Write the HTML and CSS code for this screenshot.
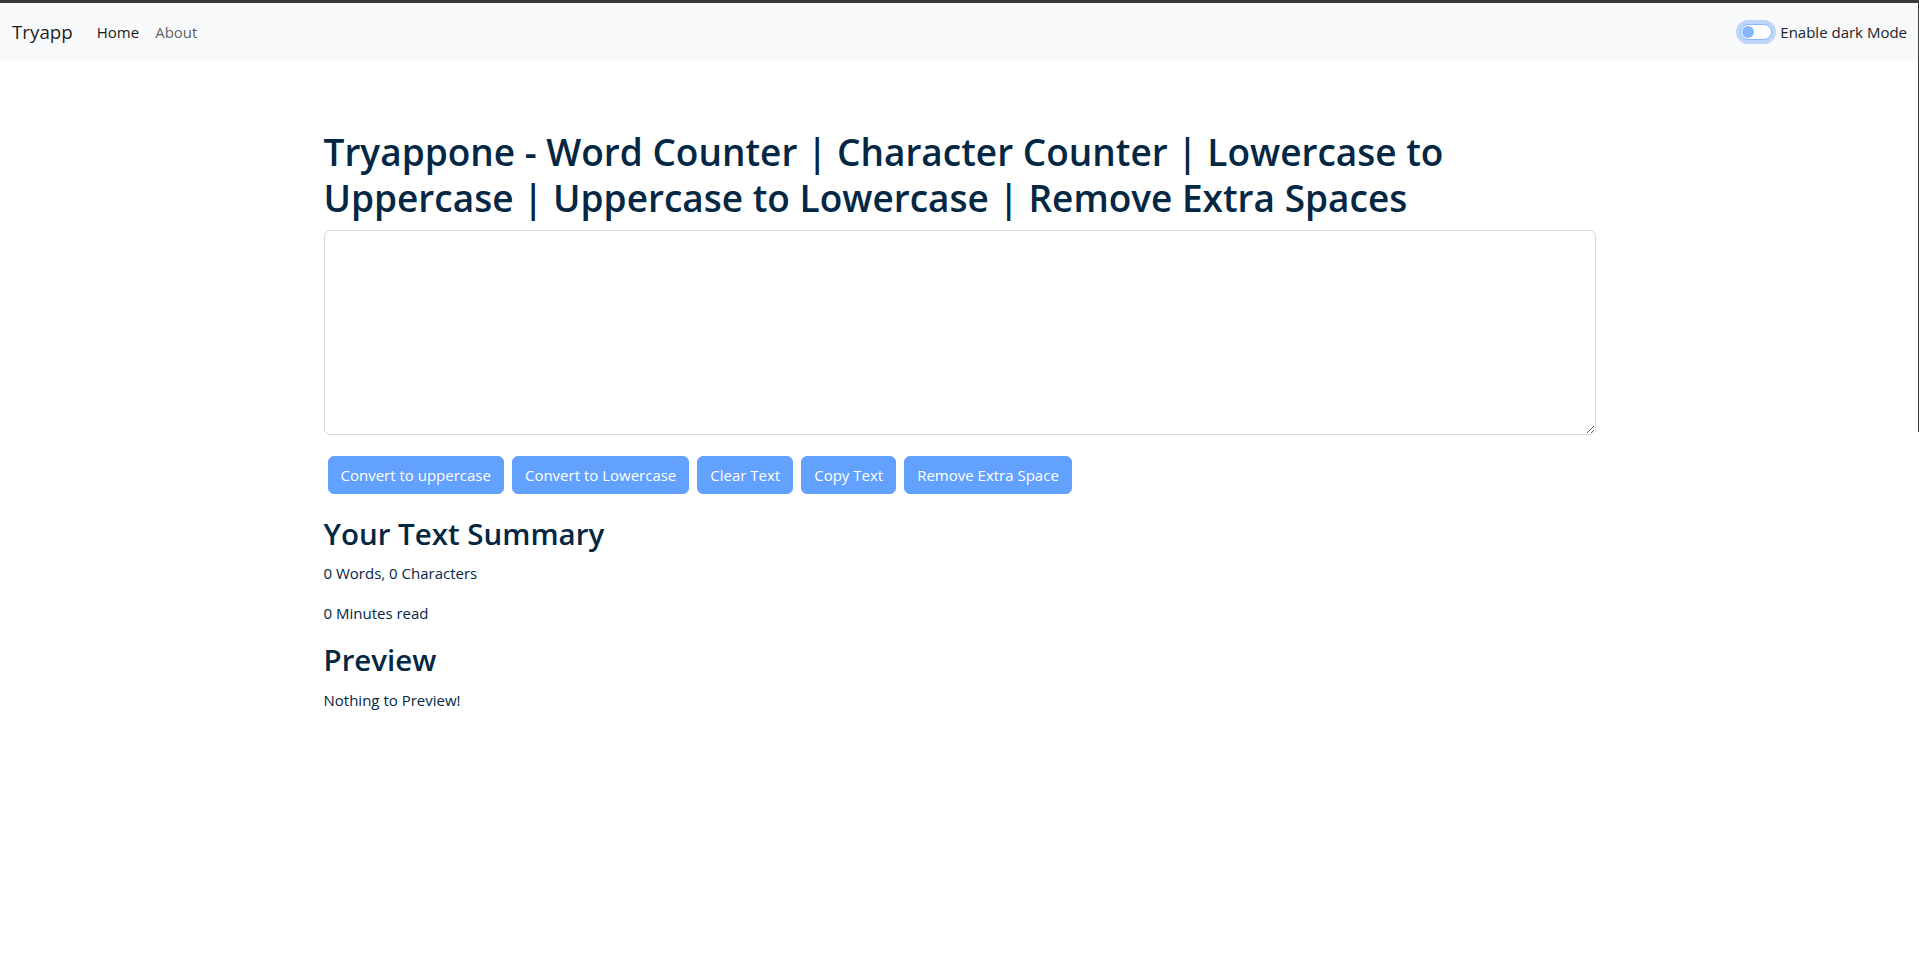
FILE: index.html
```html
<!DOCTYPE html>
<html lang="en">
<head>
<meta charset="utf-8">
<title>Tryappone - Word Counter</title>
<link rel="stylesheet" href="styles.css">
</head>
<body>
<div class="frame-top"></div>
<div class="frame-right"></div>
<nav class="navbar">
  <div class="nav-left">
    <a class="brand" href="#">Tryapp</a>
    <ul class="nav-links">
      <li><a class="nav-link active" href="#">Home</a></li>
      <li><a class="nav-link" href="#">About</a></li>
    </ul>
  </div>
  <div class="switch">
    <span class="switch-track"><span class="switch-knob"></span></span>
    <label class="switch-label">Enable dark Mode</label>
  </div>
</nav>
<main class="container">
  <h1 class="title">Tryappone - Word Counter | Character Counter | Lowercase to Uppercase | Uppercase to Lowercase | Remove Extra Spaces</h1>
  <textarea class="text-input" rows="8"></textarea>
  <div class="actions">
    <button class="btn">Convert to uppercase</button>
    <button class="btn">Convert to Lowercase</button>
    <button class="btn">Clear Text</button>
    <button class="btn">Copy Text</button>
    <button class="btn">Remove Extra Space</button>
  </div>
  <h2 class="section-title">Your Text Summary</h2>
  <p class="text">0 Words, 0 Characters</p>
  <p class="text">0 Minutes read</p>
  <h2 class="section-title">Preview</h2>
  <p class="text">Nothing to Preview!</p>
</main>
</body>
</html>
```
FILE: styles.css
```css
* { box-sizing: border-box; }

html, body {
  margin: 0;
  padding: 0;
  background: #ffffff;
}

body {
  font-family: "Open Sans", "Noto Sans", sans-serif;
  font-size: 15px;
  line-height: 24px;
  color: #042743;
  position: relative;
  min-height: 954px;
}

.frame-top {
  height: 3px;
  background: #3b3b3b;
}

.frame-right {
  position: absolute;
  top: 0;
  right: 0;
  width: 1px;
  height: 432px;
  background: #3b3b3b;
}

.navbar {
  height: 57px;
  background: #f8f9fa;
  display: flex;
  align-items: center;
  justify-content: space-between;
  padding: 0 12px;
}

.nav-left {
  display: flex;
  align-items: center;
}

.brand {
  font-size: 18.75px;
  line-height: 30px;
  color: rgba(0, 0, 0, 0.9);
  text-decoration: none;
  margin-right: 16px;
}

.nav-links {
  list-style: none;
  margin: 0;
  padding: 0;
  display: flex;
}

.nav-link {
  display: block;
  padding: 8px;
  font-size: 15px;
  line-height: 24px;
  color: rgba(0, 0, 0, 0.65);
  text-decoration: none;
}

.nav-link.active {
  color: #1a1a1a;
}

.switch {
  display: flex;
  align-items: center;
  gap: 8px;
}

.switch-track {
  width: 32px;
  height: 16px;
  border: 1px solid #86b7fe;
  border-radius: 16px;
  background: #ffffff;
  box-shadow: 0 0 0 4px rgba(13, 110, 253, 0.25);
  display: flex;
  align-items: center;
  padding-left: 1px;
}

.switch-knob {
  width: 12px;
  height: 12px;
  border-radius: 50%;
  background: #86b7fe;
}

.switch-label {
  font-size: 15px;
  line-height: 24px;
  color: #212529;
}

.container {
  max-width: 1272px;
  margin: 0 auto;
  padding-top: 69px;
}

.title {
  font-size: 37px;
  line-height: 46px;
  font-weight: 600;
  margin: 0 0 9px 0;
  color: #042743;
}

.text-input {
  display: block;
  width: 100%;
  height: 205px;
  border: 1px solid #d5d8dc;
  border-radius: 6px;
  background: #ffffff;
  padding: 6px 12px;
  font-family: inherit;
  font-size: 15px;
  line-height: 24px;
  color: #042743;
  margin: 0 0 21px 0;
  resize: vertical;
}

.actions {
  display: flex;
  flex-wrap: wrap;
  margin: 0 0 21px 0;
}

.btn {
  margin: 0 4px;
  padding: 6px 12px;
  border: 1px solid #62a1fe;
  border-radius: 6px;
  background: #62a1fe;
  color: #ffffff;
  font-family: inherit;
  font-size: 15px;
  line-height: 24px;
}

.section-title {
  font-size: 29.5px;
  line-height: 38.4px;
  font-weight: 600;
  margin: 0 0 8px 0;
  color: #042743;
}

.text {
  margin: 0 0 16px 0;
  font-size: 15px;
  line-height: 24px;
}
```
